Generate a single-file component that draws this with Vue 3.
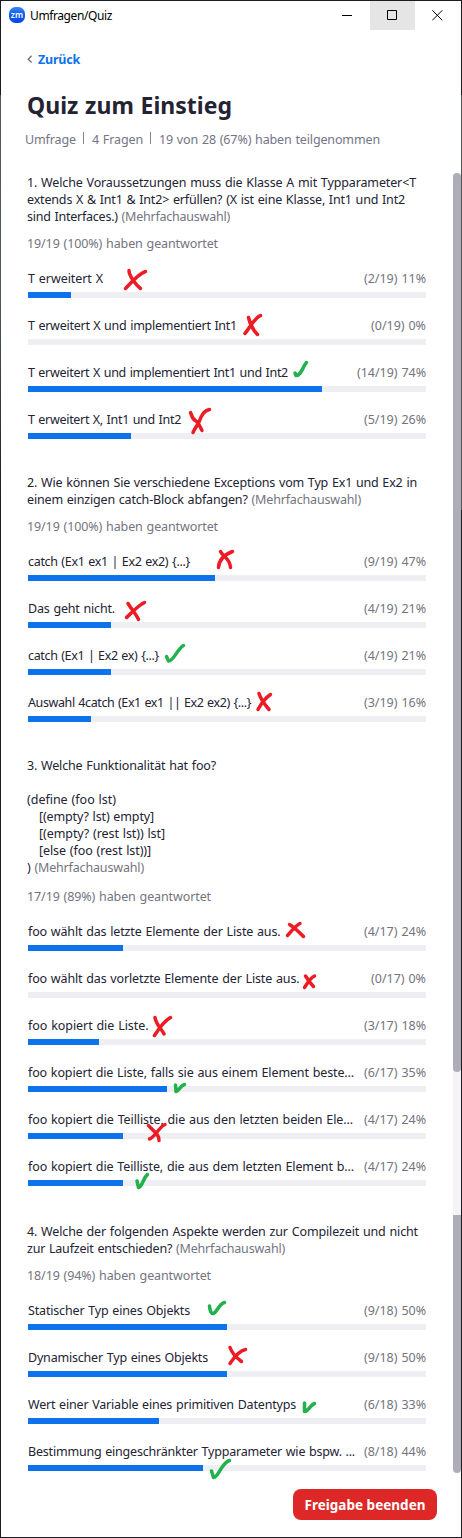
<script setup>
const vFit = {
  mounted(el, { value }) {
    if (!value) return
    const chars = el.textContent.length
    const natural = el.getBoundingClientRect().width
    el.style.letterSpacing = (value - natural) / chars + 'px'
  },
}

const questions = [
  {
    lines: [
      { text: '1. Welche Voraussetzungen muss die Klasse A mit Typparameter<T', w: 389 },
      { text: 'extends X & Int1 & Int2> erfüllen? (X ist eine Klasse, Int1 und Int2', w: 378 },
      { text: 'sind Interfaces.) ', hint: true, w: 203 },
    ],
    answered: '19/19 (100%) haben geantwortet', aw: 191,
    options: [
      { text: 'T erweitert X', w: 75, votes: '(2/19) 11%', vw: 62, bar: 43 },
      { text: 'T erweitert X und implementiert Int1', w: 209, votes: '(0/19) 0%', vw: 55, bar: 0 },
      { text: 'T erweitert X und implementiert Int1 und Int2', w: 260, votes: '(14/19) 74%', vw: 69, bar: 294 },
      { text: 'T erweitert X, Int1 und Int2', w: 153, votes: '(5/19) 26%', vw: 62, bar: 103 },
    ],
  },
  {
    lines: [
      { text: '2. Wie können Sie verschiedene Exceptions vom Typ Ex1 und Ex2 in', w: 390 },
      { text: 'einem einzigen catch-Block abfangen? ', hint: true, w: 334 },
    ],
    answered: '19/19 (100%) haben geantwortet', aw: 191,
    options: [
      { text: 'catch (Ex1 ex1 | Ex2 ex2) {...}', w: 162, votes: '(9/19) 47%', vw: 62, bar: 187 },
      { text: 'Das geht nicht.', w: 87, votes: '(4/19) 21%', vw: 62, bar: 83 },
      { text: 'catch (Ex1 | Ex2 ex) {...}', w: 131, votes: '(4/19) 21%', vw: 62, bar: 83 },
      { text: 'Auswahl 4catch (Ex1 ex1 || Ex2 ex2) {...}', w: 223, votes: '(3/19) 16%', vw: 62, bar: 63 },
    ],
  },
  {
    code: true,
    lines: [
      { text: '3. Welche Funktionalität hat foo?', w: 189 },
      { text: '' },
      { text: '(define (foo lst)', w: 89 },
      { text: '[(empty? lst) empty]', w: 115, indent: true },
      { text: '[(empty? (rest lst)) lst]', w: 126, indent: true },
      { text: '[else (foo (rest lst))]', w: 112, indent: true },
      { text: ') ', hint: true, w: 117 },
    ],
    answered: '17/19 (89%) haben geantwortet', aw: 184,
    options: [
      { text: 'foo wählt das letzte Elemente der Liste aus.', w: 252.500, votes: '(4/17) 24%', vw: 62, bar: 95 },
      { text: 'foo wählt das vorletzte Elemente der Liste aus.', w: 271.500, votes: '(0/17) 0%', vw: 55, bar: 0 },
      { text: 'foo kopiert die Liste.', w: 120.500, votes: '(3/17) 18%', vw: 62, bar: 71 },
      { text: 'foo kopiert die Liste, falls sie aus einem Element beste...', w: 326, votes: '(6/17) 35%', vw: 62, bar: 139 },
      { text: 'foo kopiert die Teilliste, die aus den letzten beiden Ele...', w: 325, votes: '(4/17) 24%', vw: 62, bar: 95 },
      { text: 'foo kopiert die Teilliste, die aus dem letzten Element b...', w: 326, votes: '(4/17) 24%', vw: 62, bar: 95 },
    ],
  },
  {
    lines: [
      { text: '4. Welche der folgenden Aspekte werden zur Compilezeit und nicht', w: 391 },
      { text: 'zur Laufzeit entschieden? ', hint: true, w: 258 },
    ],
    answered: '18/19 (94%) haben geantwortet', aw: 184,
    options: [
      { text: 'Statischer Typ eines Objekts', w: 162, votes: '(9/18) 50%', vw: 62, bar: 199 },
      { text: 'Dynamischer Typ eines Objekts', w: 180, votes: '(9/18) 50%', vw: 62, bar: 199 },
      { text: 'Wert einer Variable eines primitiven Datentyps', w: 268, votes: '(6/18) 33%', vw: 62, bar: 131 },
      { text: 'Bestimmung eingeschränkter Typparameter wie bspw. ...', w: 327, votes: '(8/18) 44%', vw: 62, bar: 175 },
    ],
  },
]

const crosses = [
  'M129 270.5 C129 276 136 285 140.5 288.5 M145.5 271.5 C138 274 130 284 125.5 288.5',
  'M248.500 317.500 C250 324 254 331 257.500 334.500 M260.500 315.500 C254 318 249 329 245 333.500',
  'M190.500 412.500 C192 416 192 419 196 421 C199 423 200 427 202 430.500 M209.500 409.500 C203 411 201 417 199 422 C197 426 195 428 193 432.500',
  'M220.500 551.500 C223 557 230 558 230.500 567.500 M232.500 551.500 C226 554 219 558 218.500 567.500',
  'M128 603.500 C132 610 136 614 138.500 619.500 M144.500 602.500 C137 606 131 614 126.500 617.500',
  'M259 693.500 C261 700 266 706 269 709.500 M270.500 694.500 C265 698 261 704 258 709.500',
  'M289.500 924.500 C294 927 300 933 303.500 936.500 M300 923.500 C295 926 291 932 287.500 935.500',
  'M305.500 976 C308 980 311 984 313.500 986.500 M314.500 976 C310 978 307 984 304.500 987.500',
  'M155 1017.500 C156 1025 162 1029 164 1034 M170.500 1017.500 C164 1021 158 1030 154.500 1035.500',
  'M148.500 1125.500 C152 1130 160 1135 159 1140.500 M165 1124.500 C159 1127 155 1137 149.500 1139',
  'M230 1347.500 C232 1353 238 1359 241.500 1361.500 M245.500 1349.500 C238 1351 233 1359 230 1363.500',
]

const ticks = [
  'M295 373 L296 375.500 C301 376 303 366 306.500 362.500',
  'M166.500 656.500 L168.500 661 C174 661 177 649 183.500 645.500',
  'M175.500 1085 L176 1091.500 C180 1090 180 1086 184.500 1084.500',
  'M137 1181 L138.500 1187.500 C143 1186 143 1178 147.500 1174.500',
  'M209.500 1306 C210 1311 211 1314 213.500 1313.500 C217 1312 219 1304 224.500 1302.500',
  'M304.500 1403 L304.500 1411.500 C309 1411 310 1405 314.500 1403.500',
  'M211.500 1471 L213.500 1477.500 C219 1477 221 1463 229.500 1460.500',
]
</script>

<template>
  <div class="window">
    <header class="titlebar">
      <svg class="logo" width="16" height="16" viewBox="0 0 16 16">
        <defs>
          <linearGradient id="zm" x1="0" y1="0" x2="0" y2="1">
            <stop offset="0" stop-color="#3d83f7" />
            <stop offset="0.5" stop-color="#0d5cf4" />
            <stop offset="1" stop-color="#0747dc" />
          </linearGradient>
        </defs>
        <rect width="16" height="16" rx="6.500" fill="url(#zm)" />
        <text x="8" y="10.700" text-anchor="middle" class="logo-text">zm</text>
      </svg>
      <span class="app-name"><span v-fit="82">Umfragen/Quiz</span></span>
      <div class="controls">
        <div class="control">
          <svg width="11" height="11"><path d="M0 5.500H10" /></svg>
        </div>
        <div class="control active">
          <svg width="11" height="11"><path d="M.5 .5H9.500V9.500H.5Z" /></svg>
        </div>
        <div class="control">
          <svg width="11" height="11"><path d="M.3 .3L10.300 10.300M10.300 .3L.3 10.300" /></svg>
        </div>
      </div>
    </header>

    <main class="content">
      <div class="back">
        <svg width="6" height="9"><path d="M4.600 .8L1.200 4.200L4.600 7.600" /></svg>
        <span v-fit="42">Zurück</span>
      </div>
      <h1><span v-fit="205">Quiz zum Einstieg</span></h1>
      <div class="meta">
        <span class="meta-item"><span v-fit="51">Umfrage</span></span>
        <span class="meta-item"><span v-fit="51">4 Fragen</span></span>
        <span class="meta-item"><span v-fit="221">19 von 28 (67%) haben teilgenommen</span></span>
      </div>

      <section v-for="(q, i) in questions" :key="i" class="question" :class="{ code: q.code }">
        <div class="prompt">
          <div v-for="(l, j) in q.lines" :key="j" class="line" :class="{ indent: l.indent }">
            <span v-fit="l.w">{{ l.text }}<span v-if="l.hint" class="hint">(Mehrfachauswahl)</span></span>
          </div>
        </div>
        <div class="answered"><span v-fit="q.aw">{{ q.answered }}</span></div>
        <div class="options">
          <div v-for="o in q.options" :key="o.text" class="option">
            <div class="row">
              <span v-fit="o.w">{{ o.text }}</span>
              <span v-fit="o.vw" class="votes">{{ o.votes }}</span>
            </div>
            <div class="track"><div class="fill" :style="{ width: o.bar + 'px' }"></div></div>
          </div>
        </div>
      </section>

      <footer class="footer">
        <button class="stop"><span v-fit="121">Freigabe beenden</span></button>
      </footer>
    </main>

    <div class="scrollbar">
      <div class="thumb first"></div>
      <div class="thumb second"></div>
    </div>

    <div class="edge left"></div>
    <div class="edge right"></div>

    <svg class="marks" width="462" height="1538" viewBox="0 0 462 1538">
      <path v-for="d in crosses" :key="d" :d="d" class="cross" />
      <path v-for="d in ticks" :key="d" :d="d" class="tick" />
    </svg>
  </div>
</template>

<style>
body {
  margin: 0;
}
</style>

<style scoped>
.window {
  position: relative;
  box-sizing: border-box;
  width: 462px;
  height: 1538px;
  border: 1px solid #1d1b1f;
  background: #fff;
  color: #232333;
  font-family: 'Noto Sans', 'Open Sans', sans-serif;
  font-size: 12.5px;
  line-height: 17px;
  white-space: pre;
  word-spacing: 0.7px;
}
.titlebar {
  display: flex;
  height: 29px;
  padding-left: 8px;
}
.logo {
  margin-top: 6px;
}
.logo-text {
  font-size: 8.5px;
  font-weight: 600;
  fill: #fff;
}
.app-name {
  margin: 6px 0 0 5px;
  color: #000;
  font-size: 12px;
}
.controls {
  display: flex;
  margin: 0 1px 0 auto;
}
.control {
  display: flex;
  width: 45px;
  height: 29px;
  justify-content: center;
  padding-top: 9px;
  box-sizing: border-box;
}
.control.active {
  background: #e5e5e5;
}
.control svg {
  fill: none;
  stroke: #000;
  stroke-width: 1;
}
.content {
  padding: 0 35px 0 26px;
}
.back {
  display: flex;
  align-items: center;
  gap: 5px;
  margin-top: 21px;
  color: #0e72ed;
  font-weight: 700;
}
.back svg {
  fill: none;
  stroke: #6e7680;
  stroke-width: 1.4;
}
h1 {
  margin: 21px 0 0;
  height: 32px;
  font-size: 23px;
  line-height: 32px;
  font-weight: 700;
}
.meta {
  display: flex;
  margin: 10px 0 26px -2px;
  color: #747487;
}
.meta-item + .meta-item {
  position: relative;
  margin-left: 16px;
}
.meta-item + .meta-item::before {
  content: '';
  position: absolute;
  left: -9px;
  top: 1px;
  width: 1px;
  height: 12px;
  background: #85858f;
}
.question + .question {
  margin-top: 34px;
}
.line {
  height: 17px;
}
.indent {
  padding-left: 12px;
}
.hint,
.answered,
.votes {
  color: #747480;
}
.answered {
  margin-top: 10px;
}
.options {
  display: flex;
  flex-direction: column;
  gap: 18px;
  margin: 18px 0 0 1px;
}
.code .answered {
  margin-top: 12px;
}
.code {
  padding-bottom: 2px;
}
.row {
  display: flex;
  height: 22px;
  justify-content: space-between;
}
.option {
  height: 29px;
}
.track {
  height: 6px;
  background: #eeeef3;
}
.fill {
  height: 6px;
  background: #0e72ed;
}
.footer {
  display: flex;
  justify-content: flex-end;
  margin: 17px -11px 0 0;
}
.stop {
  height: 31px;
  width: 144px;
  padding: 0;
  border: 0;
  border-radius: 8px;
  background: #de2828;
  color: #fff;
  font: 700 13.500px/30px 'Noto Sans', 'Open Sans', sans-serif;
}
.scrollbar {
  position: absolute;
  top: 172px;
  right: 0;
  width: 8px;
  height: 1300px;
  background: #f3f3f8;
  border-radius: 4px;
}
.thumb {
  background: #aeaeb9;
}
.first {
  height: 899px;
  border-radius: 4px;
}
.second {
  height: 258px;
  margin-top: 143px;
  border-radius: 0 0 4px 4px;
}
.edge {
  position: absolute;
  top: 94px;
  width: 1px;
}
.left {
  left: -1px;
  height: 410px;
  background: linear-gradient(#55575a, #50585c 50%, #1d1b1f);
}
.right {
  right: -1px;
  height: 415px;
  background: #55565a;
}
.marks {
  position: absolute;
  top: -1px;
  left: -1px;
  fill: none;
  stroke-width: 3.5;
  stroke-linecap: round;
  stroke-linejoin: round;
}
.cross {
  stroke: #ed1c24;
}
.tick {
  stroke: #22b14c;
}
</style>
